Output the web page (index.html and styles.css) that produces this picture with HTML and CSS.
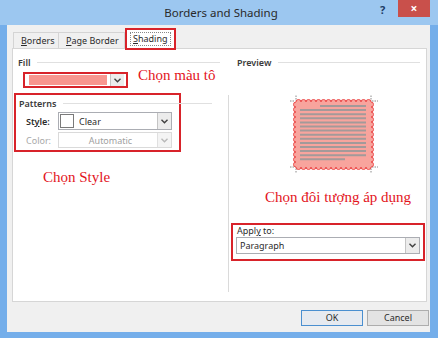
FILE: index.html
```html
<!DOCTYPE html>
<html lang="vi">
<head>
    <meta charset="UTF-8">
    <meta name="viewport" content="width=device-width, initial-scale=1.0">
    <title>Borders and Shading</title>
    <link rel="stylesheet" href="styles.css">
</head>
<body>

  <div class="window">
    <div class="titlebar">
      <div class="title">Borders and Shading</div>
      <div class="help">?</div>
      <div class="close">&#215;</div>
    </div>

    <div class="dialog">
      <div class="tabs">
        <div class="tab tab-borders"><u>B</u>orders</div>
        <div class="tab tab-page"><u>P</u>age Border</div>
        <div class="tab-mark">
          <div class="tab active"><u>S</u>hading</div>
        </div>
      </div>

      <div class="panel">
        <!-- cot trai: Fill + Patterns -->
        <div class="col-left">
          <div class="legend">Fill</div>
          <div class="fill-row">
            <div class="fill-box">
              <span class="fill-swatch"></span>
              <span class="arrow">
                <svg width="7" height="5" viewBox="0 0 7 5"><polyline points="0.5,0.8 3.5,3.8 6.5,0.8" fill="none" stroke="#404040" stroke-width="1.4"/></svg>
              </span>
            </div>
            <div class="note note-fill">Chọn màu tô</div>
          </div>

          <div class="patterns">
            <div class="legend legend-wide">Patterns</div>
            <div class="prow">
              <span class="plabel strong">St<u>y</u>le:</span>
              <div class="select style-select">
                <span class="clear-swatch"></span>
                <span class="select-text">Clear</span>
                <span class="arrow">
                  <svg width="7" height="5" viewBox="0 0 7 5"><polyline points="0.5,0.8 3.5,3.8 6.5,0.8" fill="none" stroke="#404040" stroke-width="1.4"/></svg>
                </span>
              </div>
            </div>
            <div class="prow">
              <span class="plabel muted">Color:</span>
              <div class="select color-select">
                <span class="select-text centered">Automatic</span>
                <span class="arrow">
                  <svg width="7" height="5" viewBox="0 0 7 5"><polyline points="0.5,0.8 3.5,3.8 6.5,0.8" fill="none" stroke="#b8b8b8" stroke-width="1.4"/></svg>
                </span>
              </div>
            </div>
          </div>

          <div class="note note-style">Chọn Style</div>
        </div>

        <!-- cot phai: Preview -->
        <div class="col-right">
          <div class="legend legend-preview">Preview</div>
          <div class="preview">
            <svg class="preview-art" width="88" height="78" viewBox="0 0 88 78">
              <g stroke="#8a8a8a" stroke-width="1" stroke-dasharray="1.5 1" fill="none">
                <path d="M6 0.5 V6 M0 6 H5"/>
                <path d="M81 0.5 V6 M82 6 H88"/>
                <path d="M6 77.5 V72 M0 72 H5"/>
                <path d="M81 77.5 V72 M82 72 H88"/>
              </g>
              <path fill="#f8a49d" stroke="#ec4a4a" stroke-width="1"
                d="M6 7 a2.5 2.5 0 0 1 5 0 a2.5 2.5 0 0 1 5 0 a2.5 2.5 0 0 1 5 0 a2.5 2.5 0 0 1 5 0 a2.5 2.5 0 0 1 5 0 a2.5 2.5 0 0 1 5 0 a2.5 2.5 0 0 1 5 0 a2.5 2.5 0 0 1 5 0 a2.5 2.5 0 0 1 5 0 a2.5 2.5 0 0 1 5 0 a2.5 2.5 0 0 1 5 0 a2.5 2.5 0 0 1 5 0 a2.5 2.5 0 0 1 5 0 a2.5 2.5 0 0 1 5 0 a2.5 2.5 0 0 1 5 0
                   a2.5 2.5 0 0 1 0 5 a2.5 2.5 0 0 1 0 5 a2.5 2.5 0 0 1 0 5 a2.5 2.5 0 0 1 0 5 a2.5 2.5 0 0 1 0 5 a2.5 2.5 0 0 1 0 5 a2.5 2.5 0 0 1 0 5 a2.5 2.5 0 0 1 0 5 a2.5 2.5 0 0 1 0 5 a2.5 2.5 0 0 1 0 5 a2.5 2.5 0 0 1 0 5 a2.5 2.5 0 0 1 0 5 a2.5 2.5 0 0 1 0 5
                   a2.5 2.5 0 0 1 -5 0 a2.5 2.5 0 0 1 -5 0 a2.5 2.5 0 0 1 -5 0 a2.5 2.5 0 0 1 -5 0 a2.5 2.5 0 0 1 -5 0 a2.5 2.5 0 0 1 -5 0 a2.5 2.5 0 0 1 -5 0 a2.5 2.5 0 0 1 -5 0 a2.5 2.5 0 0 1 -5 0 a2.5 2.5 0 0 1 -5 0 a2.5 2.5 0 0 1 -5 0 a2.5 2.5 0 0 1 -5 0 a2.5 2.5 0 0 1 -5 0 a2.5 2.5 0 0 1 -5 0 a2.5 2.5 0 0 1 -5 0
                   a2.5 2.5 0 0 1 0 -5 a2.5 2.5 0 0 1 0 -5 a2.5 2.5 0 0 1 0 -5 a2.5 2.5 0 0 1 0 -5 a2.5 2.5 0 0 1 0 -5 a2.5 2.5 0 0 1 0 -5 a2.5 2.5 0 0 1 0 -5 a2.5 2.5 0 0 1 0 -5 a2.5 2.5 0 0 1 0 -5 a2.5 2.5 0 0 1 0 -5 a2.5 2.5 0 0 1 0 -5 a2.5 2.5 0 0 1 0 -5 a2.5 2.5 0 0 1 0 -5 Z"/>
              <g stroke="#a39a9a" stroke-width="2">
                <line x1="30" y1="11" x2="76" y2="11"/>
                <line x1="10" y1="15.1" x2="76" y2="15.1"/>
                <line x1="10" y1="19.2" x2="76" y2="19.2"/>
                <line x1="10" y1="23.3" x2="76" y2="23.3"/>
                <line x1="10" y1="27.4" x2="76" y2="27.4"/>
                <line x1="10" y1="31.5" x2="76" y2="31.5"/>
                <line x1="10" y1="35.6" x2="76" y2="35.6"/>
                <line x1="10" y1="39.7" x2="76" y2="39.7"/>
                <line x1="10" y1="43.8" x2="76" y2="43.8"/>
                <line x1="10" y1="47.9" x2="76" y2="47.9"/>
                <line x1="10" y1="52" x2="76" y2="52"/>
                <line x1="10" y1="56.1" x2="76" y2="56.1"/>
                <line x1="10" y1="60.2" x2="76" y2="60.2"/>
                <line x1="10" y1="64.3" x2="55" y2="64.3"/>
              </g>
            </svg>

            <div class="note note-apply">Chọn đôi tượng áp dụng</div>

            <div class="apply">
              <div class="apply-label">Appl<u>y</u> to:</div>
              <div class="select apply-select">
                <span class="select-text">Paragraph</span>
                <span class="arrow">
                  <svg width="7" height="5" viewBox="0 0 7 5"><polyline points="0.5,0.8 3.5,3.8 6.5,0.8" fill="none" stroke="#404040" stroke-width="1.4"/></svg>
                </span>
              </div>
            </div>
          </div>
        </div>
      </div>

      <div class="buttons">
        <button class="btn btn-ok">OK</button>
        <button class="btn">Cancel</button>
      </div>
    </div>
  </div>

</body>
</html>
```
FILE: styles.css
```css
* {
  box-sizing: border-box;
}

body {
  margin: 0;
  width: 438px;
  height: 338px;
  overflow: hidden;
  font-family: "Noto Sans", "Open Sans", sans-serif;
  font-size: 9px;
  color: #1e1e1e;
}

.window {
  width: 438px;
  height: 338px;
  background: #74aeea; /* vien cua so */
  display: flex;
  flex-direction: column;
}

/* thanh tieu de */
.titlebar {
  height: 25px;
  background: #9cc7f0;
  display: flex;
  align-items: flex-start;
}

.title {
  flex: 1;
  text-align: center;
  padding-left: 62px;
  font-size: 11.5px;
  line-height: 26px;
  color: #2a2a2a;
}

.help {
  width: 18px;
  font-size: 11px;
  font-weight: 700;
  line-height: 20px;
  color: #1d3b66;
}

.close {
  width: 32px;
  height: 17px;
  margin-right: 8px;
  background: #c9504b;
  color: #fff;
  font-size: 12px;
  font-weight: 700;
  line-height: 17px;
  text-align: center;
}

/* than hop thoai */
.dialog {
  flex: 1;
  margin: 0 8px 6px 7px;
  background: #f0f0f0;
  display: flex;
  flex-direction: column;
}

.tabs {
  height: 23px;
  display: flex;
  align-items: flex-end;
  padding-left: 6px;
  position: relative;
  z-index: 2;
}

.tab {
  height: 16px;
  line-height: 16px;
  padding: 0 6px;
  border: 1px solid #d4d4d4;
  border-bottom: none;
  background: #f0f0f0;
  color: #2b2b2b;
  white-space: nowrap;
  margin-right: -1px;
}

.tab-borders {
  width: 46px;
  padding: 0 0 0 7px;
}

.tab-page {
  width: 67px;
  padding: 0 0 0 7px;
}

.tab-mark {
  border: 2px solid #d8232a;
  margin-left: 1px;
  margin-bottom: -2px;
  padding: 0 1px;
  background: #fff;
}

.tab.active {
  height: 18px;
  line-height: 18px;
  background: #fff;
  border: none;
  padding: 0 5px;
  margin: 0;
  outline: 1px dotted #888;
  outline-offset: -3px;
}

.panel {
  margin-left: 5px;
  width: 415px;
  height: 254px;
  background: #fff;
  border: 1px solid #d6d6d6;
  display: flex;
}

.col-left {
  width: 215px;
  padding: 6px 0 0 5px;
}

.col-right {
  flex: 1;
  padding-top: 6px;
}

.legend {
  display: flex;
  align-items: center;
  height: 14px;
  font-weight: 600;
  color: #3a3a3a;
}

.legend::after {
  content: "";
  flex: 1;
  height: 1px;
  background: #e0e0e0;
  margin: 0 8px 0 7px;
}

.legend-wide {
  margin-right: -41px;
}

.legend-preview {
  padding-left: 9px;
}

.legend-preview::after {
  margin-right: 6px;
}

/* Fill */
.fill-row {
  display: flex;
  align-items: flex-start;
  margin-top: 3px;
  margin-left: 5px;
}

.fill-box {
  width: 105px;
  height: 16px;
  border: 2px solid #d8232a;
  display: flex;
  align-items: center;
  padding-left: 4px;
}

.fill-swatch {
  width: 78px;
  height: 10px;
  background: #f8968f;
}

.fill-box .arrow {
  margin-left: 3px;
  height: 12px;
  width: 14px;
}

.arrow {
  display: flex;
  align-items: center;
  justify-content: center;
  width: 14px;
  height: 100%;
  background: #ececec;
  border-left: 1px solid #c4c4c4;
}

.note {
  font-family: "Liberation Serif", "DejaVu Serif", serif;
  color: #e3131c;
  font-size: 15px;
  line-height: 18px;
}

.note-fill {
  margin-left: 10px;
  margin-top: -6px;
}

/* Patterns */
.patterns {
  width: 167px;
  height: 59px;
  margin: 5px 0 0 -4px;
  border: 2px solid #d8232a;
  padding: 1px 0 0 3px;
}

.prow {
  display: flex;
  align-items: center;
  margin-top: 2px;
  padding-left: 7px;
}

.prow:first-of-type {
  margin-top: 4px;
}

.plabel {
  width: 32px;
}

.strong {
  font-weight: 600;
  color: #2b2b2b;
}

.muted {
  color: #a8a8a8;
}

.select {
  display: flex;
  align-items: center;
  background: #fff;
  border: 1px solid #abadb3;
}

.style-select {
  width: 114px;
  height: 18px;
  padding-left: 1px;
}

.clear-swatch {
  width: 14px;
  height: 14px;
  border: 1px solid #7a7a7a;
}

.select-text {
  flex: 1;
  padding-left: 5px;
  color: #2b2b2b;
}

.color-select {
  width: 114px;
  height: 16px;
  border-color: #dadada;
}

.color-select .arrow {
  background: #f4f4f4;
  border-left-color: #e0e0e0;
}

.centered {
  text-align: center;
  color: #a0a0a0;
}

.note-style {
  margin: 16px 0 0 25px;
}

/* Preview */
.preview {
  margin-top: 19px;
  height: 197px;
  border-left: 1px solid #dadada;
}

.preview-art {
  display: block;
  margin: 26px 0 0 61px;
}

.note-apply {
  margin: 15px 0 0 36px;
}

.apply {
  width: 194px;
  height: 38px;
  margin: 17px 0 0 2px;
  border: 2px solid #d8232a;
  padding: 0 3px 0 3px;
}

.apply-label {
  line-height: 11px;
  padding-left: 1px;
  color: #2b2b2b;
}

.apply-select {
  height: 17px;
  margin-top: 1px;
}

.apply-select .select-text {
  padding-left: 3px;
}

/* nut bam */
.buttons {
  display: flex;
  justify-content: flex-end;
  gap: 4px;
  margin-top: 8px;
  margin-right: 1px;
}

.btn {
  width: 62px;
  height: 16px;
  padding: 0;
  font-family: "Noto Sans", "Open Sans", sans-serif;
  font-size: 9px;
  line-height: 14px;
  color: #2b2b2b;
  background: #e3e3e3;
  border: 1px solid #adadad;
}

.btn-ok {
  border-color: #4a8fd0;
  background: #e6eaf0;
}
```
